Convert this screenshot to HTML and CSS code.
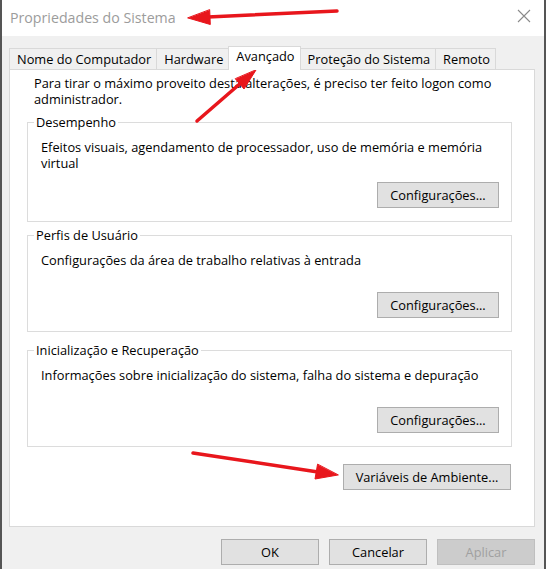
FILE: index.html
```html
<!DOCTYPE html>
<html lang="pt-BR">
<head>
<meta charset="utf-8">
<title>Propriedades do Sistema</title>
<link rel="stylesheet" href="styles.css">
</head>
<body>
<div class="window">
  <div class="titlebar">
    <span class="title">Propriedades do Sistema</span>
    <svg class="close" viewBox="0 0 14 14" width="14" height="14" aria-label="Fechar">
      <path d="M1 1 L13 13 M13 1 L1 13" stroke="#8a8a8a" stroke-width="1.1" fill="none"/>
    </svg>
  </div>
  <div class="content">
    <div class="tabs">
      <div class="tab">Nome do Computador</div>
      <div class="tab">Hardware</div>
      <div class="tab active">Avançado</div>
      <div class="tab">Proteção do Sistema</div>
      <div class="tab">Remoto</div>
    </div>
    <div class="panel">
      <p class="intro">Para tirar o máximo proveito desta alterações, é preciso ter feito logon como administrador.</p>
      <fieldset class="group group-perf">
        <legend>Desempenho</legend>
        <p class="desc desc-tall">Efeitos visuais, agendamento de processador, uso de memória e memória virtual</p>
        <div class="btn-row"><button class="btn btn-config">Configurações...</button></div>
      </fieldset>
      <fieldset class="group group-prof">
        <legend>Perfis de Usuário</legend>
        <p class="desc">Configurações da área de trabalho relativas à entrada</p>
        <div class="btn-row"><button class="btn btn-config">Configurações...</button></div>
      </fieldset>
      <fieldset class="group group-init">
        <legend>Inicialização e Recuperação</legend>
        <p class="desc">Informações sobre inicialização do sistema, falha do sistema e depuração</p>
        <div class="btn-row"><button class="btn btn-config">Configurações...</button></div>
      </fieldset>
      <div class="env-row"><button class="btn btn-env">Variáveis de Ambiente...</button></div>
    </div>
    <div class="footer">
      <button class="btn btn-dlg">OK</button>
      <button class="btn btn-dlg">Cancelar</button>
      <button class="btn btn-dlg" disabled>Aplicar</button>
    </div>
  </div>
  <svg class="arrows" viewBox="0 0 546 569" width="546" height="569" aria-hidden="true">
    <g fill="#e8161c" stroke="#e8161c" stroke-linecap="round">
      <line x1="337" y1="11" x2="208" y2="17" stroke-width="3.5"/>
      <polygon points="188,18 210.3,24.5 209.7,10" stroke-width="1"/>
      <line x1="197" y1="121" x2="242" y2="82" stroke-width="3.5"/>
      <polygon points="256,70 244,89 235.5,79" stroke-width="1"/>
      <line x1="193" y1="453" x2="318" y2="472" stroke-width="3.5"/>
      <polygon points="338,475 315,479 317.5,464.5" stroke-width="1"/>
    </g>
  </svg>
</div>
</body>
</html>
```

FILE: styles.css
```css
* { box-sizing: border-box; }
html, body { margin: 0; padding: 0; }
body {
  width: 546px;
  height: 569px;
  overflow: hidden;
  font-family: "Open Sans", "Noto Sans", sans-serif;
  font-size: 12.8px;
  color: #000;
  background: #f0f0f0;
}
.window {
  position: relative;
  height: 569px;
  border-left: 2px solid #555;
  border-right: 2px solid #555;
  background: #f0f0f0;
}
.titlebar {
  height: 36px;
  background: #fff;
  display: flex;
  align-items: center;
  justify-content: space-between;
  padding: 0 13px 0 8px;
}
.title {
  font-size: 14.2px;
  line-height: 20px;
  color: #9c9c9c;
  margin-top: 0;
}
.close { display: block; margin-top: -4px; }
.content { padding: 10px 9px 0 7px; }
.tabs {
  display: flex;
  align-items: flex-end;
  height: 23px;
}
.tab {
  height: 21px;
  padding: 0 5px 0 7px;
  border: 1px solid #d9d9d9;
  border-bottom: none;
  margin-right: -1px;
  background: #f0f0f0;
  line-height: 20px;
  white-space: nowrap;
}
.tab.active {
  height: 24px;
  margin-bottom: -1px;
  background: #fff;
  position: relative;
  z-index: 1;
  line-height: 19px;
}
.panel {
  height: 458px;
  background: #fff;
  border: 1px solid #d9d9d9;
  padding: 5px 22px 0 17px;
  display: flex;
  flex-direction: column;
}
.intro {
  margin: 0;
  padding-left: 7px;
  line-height: 16px;
}
.group {
  margin: 7px 0 0 0;
  padding: 9px 12px 13px 13px;
  border: 1px solid #dcdcdc;
  min-width: 0;
}
.group legend {
  padding: 0 2px;
  margin-left: -7px;
  line-height: 16px;
}
.group-prof { margin-top: 5px; }
.group-init { margin-top: 10px; }
.desc { margin: 0; line-height: 16px; min-height: 40px; }
.desc-tall { min-height: 43px; }
.btn-row {
  display: flex;
  justify-content: flex-end;
}
.btn {
  height: 26px;
  padding: 0 8px;
  border: 1px solid #adadad;
  background: #e1e1e1;
  color: #000;
  font: inherit;
  line-height: 22px;
}
.btn:disabled { background: #cccccc; border-color: #bfbfbf; color: #a0a0a0; }
.btn-config { width: 122px; }
.env-row {
  margin-top: 17px;
  display: flex;
  justify-content: flex-end;
  padding-right: 1px;
}
.btn-env { width: 168px; }
.footer {
  margin-top: 12px;
  display: flex;
  justify-content: flex-end;
  gap: 10px;
}
.btn-dlg { width: 98px; }
.arrows {
  position: absolute;
  left: -2px;
  top: 0;
  pointer-events: none;
}
```
